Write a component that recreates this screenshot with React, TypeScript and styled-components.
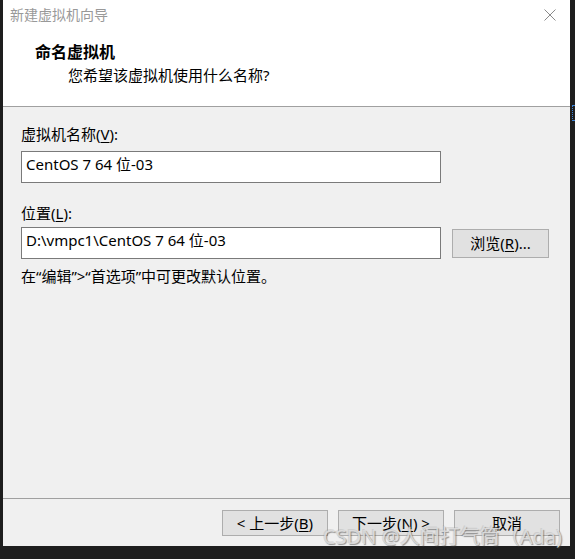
import React from "react";
import styled, { createGlobalStyle } from "styled-components";

const Global = createGlobalStyle`
  html, body { margin: 0; padding: 0; background: #1e1e1e; }
  body { width: 575px; height: 559px; overflow: hidden; }
  #root { width: 575px; height: 559px; }
`;

const FONT = `"Noto Sans", "Noto Sans CJK SC", sans-serif`;

const Screen = styled.div`
  position: relative;
  width: 575px;
  height: 559px;
  background: #1e1e1e;
  padding-left: 3px;
  box-sizing: border-box;
  font-family: ${FONT};
  font-size: 15px;
  color: #000;
`;

const Window = styled.div`
  width: 567px;
  height: 546px;
  background: #f0f0f0;
  display: flex;
  flex-direction: column;
`;

const TitleBar = styled.div`
  height: 30px;
  flex: none;
  background: #fff;
  display: flex;
  align-items: center;
  justify-content: space-between;
  padding: 0 14px 0 7px;
`;

const TitleText = styled.span`
  color: #999;
  font-size: 14px;
  line-height: 20px;
`;

const Header = styled.div`
  height: 77px;
  flex: none;
  box-sizing: border-box;
  background: #fff;
  border-bottom: 1px solid #a0a0a0;
  padding: 11px 0 0 32px;
  display: flex;
  flex-direction: column;
`;

const HeaderTitle = styled.div`
  font-weight: 700;
  font-size: 16px;
  line-height: 22px;
`;

const HeaderSub = styled.div`
  margin-top: 1px;
  padding-left: 33px;
  line-height: 22px;
`;

const Body = styled.div`
  flex: 1;
  padding: 17px 0 0 18px;
  display: flex;
  flex-direction: column;
`;

const Label = styled.div<{ $gap: number }>`
  line-height: 20px;
  margin-bottom: ${(p) => p.$gap}px;
`;

const Row = styled.div`
  display: flex;
  align-items: center;
  gap: 11px;
`;

const TextBox = styled.div`
  width: 414px;
  height: 30px;
  background: #fff;
  border: 1px solid #7a7a7a;
  padding: 0 0 0 4px;
  box-sizing: content-box;
  line-height: 24px;
  white-space: nowrap;
`;

const Spacer = styled.div<{ $h: number }>`
  height: ${(p) => p.$h}px;
  flex: none;
`;

const Button = styled.div<{ $w: number; $h: number }>`
  width: ${(p) => p.$w}px;
  height: ${(p) => p.$h}px;
  box-sizing: border-box;
  background: #e1e1e1;
  border: 1px solid #adadad;
  display: flex;
  align-items: center;
  justify-content: center;
  line-height: 20px;
  white-space: pre;
`;

const Help = styled.div`
  margin-top: 6px;
  line-height: 22px;
`;

const Footer = styled.div`
  height: 48px;
  flex: none;
  box-sizing: border-box;
  border-top: 1px solid #a0a0a0;
  display: flex;
  justify-content: flex-end;
  align-items: flex-start;
  gap: 10px;
  padding: 11px 10px 0 0;
`;

const U = styled.span`
  text-decoration: underline;
  text-underline-offset: 2px;
`;

const Watermark = styled.div`
  position: absolute;
  right: 13px;
  top: 525px;
  font-family: ${FONT};
  font-size: 20px;
  line-height: 24px;
  color: rgba(222, 222, 222, 0.9);
  text-shadow: 1px 1px 1px rgba(70, 70, 70, 0.55), -1px -1px 0 rgba(150, 150, 150, 0.25);
  white-space: nowrap;
  pointer-events: none;
`;

const Artifact = styled.div`
  position: absolute;
  left: 572px;
  top: 105px;
  width: 2px;
  height: 14px;
  border-left: 1px dotted #3b82d6;
  border-top: 1px solid #3b82d6;
  border-bottom: 1px solid #3b82d6;
`;

const CloseIcon = () => (
  <svg width="12" height="12" viewBox="0 0 12 12">
    <path d="M0.5 0.5 L11.5 11.5 M11.5 0.5 L0.5 11.5" stroke="#8a8a8a" strokeWidth="1" fill="none" />
  </svg>
);

export default function App() {
  return (
    <>
      <Global />
      <Screen>
        <Window>
          <TitleBar>
            <TitleText>新建虚拟机向导</TitleText>
            <CloseIcon />
          </TitleBar>
          <Header>
            <HeaderTitle>命名虚拟机</HeaderTitle>
            <HeaderSub>您希望该虚拟机使用什么名称?</HeaderSub>
          </Header>
          <Body>
            <Label $gap={7}>
              虚拟机名称(<U>V</U>):
            </Label>
            <Row>
              <TextBox>CentOS 7 64 位-03</TextBox>
            </Row>
            <Spacer $h={20} />
            <Label $gap={4}>
              位置(<U>L</U>):
            </Label>
            <Row>
              <TextBox>D:\vmpc1\CentOS 7 64 位-03</TextBox>
              <Button $w={97} $h={29}>
                浏览(<U>R</U>)...
              </Button>
            </Row>
            <Help>在“编辑”&gt;“首选项”中可更改默认位置。</Help>
          </Body>
          <Footer>
            <Button $w={106} $h={26}>
              {"< 上一步("}<U>B</U>)
            </Button>
            <Button $w={106} $h={26}>
              下一步(<U>N</U>){" >"}
            </Button>
            <Button $w={106} $h={26}>取消</Button>
          </Footer>
        </Window>
        <Artifact />
        <Watermark>CSDN @人间打气筒（Ada)</Watermark>
      </Screen>
    </>
  );
}
